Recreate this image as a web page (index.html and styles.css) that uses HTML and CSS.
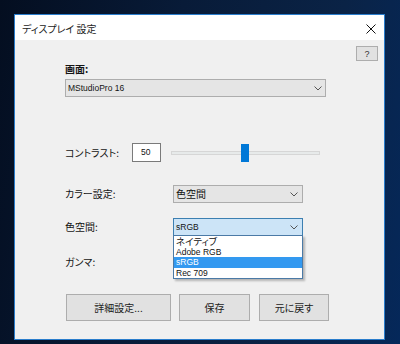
FILE: index.html
```html
<!DOCTYPE html>
<html lang="ja">
<head>
<meta charset="utf-8">
<link rel="stylesheet" href="styles.css">
</head>
<body>
<div class="desktop">
  <div class="window">
    <div class="titlebar">
      <span class="title">ディスプレイ 設定</span>
      <svg class="close" width="10" height="10" viewBox="0 0 10 10"><path d="M0.5 0.5 L9.5 9.5 M9.5 0.5 L0.5 9.5" stroke="#111" stroke-width="1" fill="none"/></svg>
    </div>
    <div class="content">
      <div class="help-row"><div class="btn help lat">?</div></div>
      <div class="field-label">画面:</div>
      <div class="combo wide"><span class="lat">MStudioPro 16</span><svg class="chev" width="8" height="5" viewBox="0 0 8 5"><path d="M0.5 0.5 L4 4 L7.5 0.5" stroke="#555" fill="none"/></svg></div>

      <div class="row contrast">
        <span class="label short">コントラスト:</span>
        <div class="numbox lat">50</div>
        <div class="slider">
          <div class="track"></div>
          <div class="thumb"></div>
        </div>
      </div>

      <div class="row colors">
        <span class="label">カラー設定:</span>
        <div class="combo narrow"><span>色空間</span><svg class="chev" width="8" height="5" viewBox="0 0 8 5"><path d="M0.5 0.5 L4 4 L7.5 0.5" stroke="#555" fill="none"/></svg></div>
      </div>

      <div class="row space">
        <span class="label">色空間:</span>
        <div class="combo narrow focus"><span class="lat">sRGB</span><svg class="chev" width="8" height="5" viewBox="0 0 8 5"><path d="M0.5 0.5 L4 4 L7.5 0.5" stroke="#555" fill="none"/></svg>
          <ul class="dropdown">
            <li class="jp">ネイティブ</li>
            <li class="lat">Adobe RGB</li>
            <li class="lat sel">sRGB</li>
            <li class="lat">Rec 709</li>
          </ul>
        </div>
      </div>

      <div class="row gamma">
        <span class="label">ガンマ:</span>
      </div>

      <div class="buttons">
        <div class="btn b1">詳細設定...</div>
        <div class="btn b2">保存</div>
        <div class="btn b3">元に戻す</div>
      </div>
    </div>
  </div>
</div>
</body>
</html>
```

FILE: styles.css
```css
* { box-sizing: border-box; }
html, body { margin: 0; padding: 0; }
body {
  font-family: "Noto Sans CJK JP", "Noto Sans", sans-serif;
  font-feature-settings: "palt" 1;
  font-size: 10px;
  color: #141414;
}
.lat {
  font-family: "Liberation Sans", "Noto Sans CJK JP", sans-serif;
  font-size: 8.5px;
}
.desktop {
  width: 400px;
  height: 344px;
  overflow: hidden;
  background: linear-gradient(100deg, #040e20 0%, #081b38 40%, #0a2346 75%, #05285a 100%);
  padding: 14px 0 0 14px;
}
.window {
  width: 371px;
  height: 326px;
  border: 1px solid #2a7dcc;
  background: #f0f0f0;
  display: flex;
  flex-direction: column;
}
.titlebar {
  height: 25px;
  background: #fff;
  display: flex;
  align-items: center;
  justify-content: space-between;
  padding: 0 8px 0 7px;
  flex-shrink: 0;
}
.title {
  font-size: 10px;
  color: #222;
  line-height: 14px;
  margin-top: 2px;
}
.close { margin-top: 2px; }
.content {
  padding-left: 50px;
  display: flex;
  flex-direction: column;
}
.help-row {
  margin-top: 6px;
  display: flex;
  justify-content: flex-end;
  padding-right: 6px;
}
.btn {
  background: #e1e1e1;
  border: 1px solid #adadad;
  display: flex;
  align-items: center;
  justify-content: center;
  color: #222;
  white-space: nowrap;
}
.help {
  width: 22px;
  height: 15px;
  font-size: 9px;
  line-height: 10px;
  color: #333;
}
.field-label {
  margin-top: 1px;
  height: 14px;
  line-height: 14px;
  font-weight: bold;
  font-size: 10px;
}
.combo {
  position: relative;
  height: 18px;
  background: #e5e5e5;
  border: 1px solid #adadad;
  display: flex;
  align-items: center;
  justify-content: space-between;
  padding: 0 4px 0 2px;
  line-height: 14px;
}
.combo.wide {
  margin-top: 3px;
  width: 261px;
  padding-right: 3px;
}
.combo.narrow { width: 130px; }
.combo.focus {
  background: #cce4f7;
  border-color: #3c7fb1;
}
.row {
  display: flex;
  align-items: center;
  height: 18px;
}
.label {
  width: 108px;
  flex-shrink: 0;
  line-height: 14px;
  white-space: nowrap;
}
.label.short { width: 67px; }
.contrast { margin-top: 46px; height: 19px; }
.colors { margin-top: 23px; }
.space { margin-top: 15px; }
.gamma { margin-top: 17px; }
.numbox {
  width: 29px;
  height: 19px;
  background: #fff;
  border: 1px solid #7a7a7a;
  padding-left: 8px;
  line-height: 17px;
}
.slider {
  position: relative;
  margin-left: 10px;
  width: 149px;
  height: 19px;
  display: flex;
  align-items: center;
}
.track {
  width: 100%;
  height: 4px;
  background: #e7eaea;
  border: 1px solid #d6d6d6;
}
.thumb {
  position: absolute;
  left: 70px;
  top: 1px;
  width: 8px;
  height: 18px;
  background: #0078d7;
}
.dropdown {
  position: absolute;
  left: -1px;
  top: 16px;
  width: 130px;
  margin: 0;
  padding: 0;
  list-style: none;
  background: #fff;
  border: 1px solid #4b7aa6;
  box-shadow: 2px 2px 2px rgba(0,0,0,0.25);
  z-index: 5;
}
.dropdown li {
  height: 10.5px;
  line-height: 10.5px;
  padding-left: 2px;
  color: #111;
  white-space: nowrap;
}
.dropdown li.jp {
  font-size: 9.5px;
}
.dropdown li.sel {
  background: #3399f0;
  color: #fff;
}
.buttons {
  margin-top: 23px;
  display: flex;
  padding-left: 1px;
}
.buttons .btn {
  height: 27px;
  line-height: 14px;
}
.b1 { width: 105px; }
.b2 { width: 71px; margin-left: 8px; }
.b3 { width: 70px; margin-left: 9px; }
```
